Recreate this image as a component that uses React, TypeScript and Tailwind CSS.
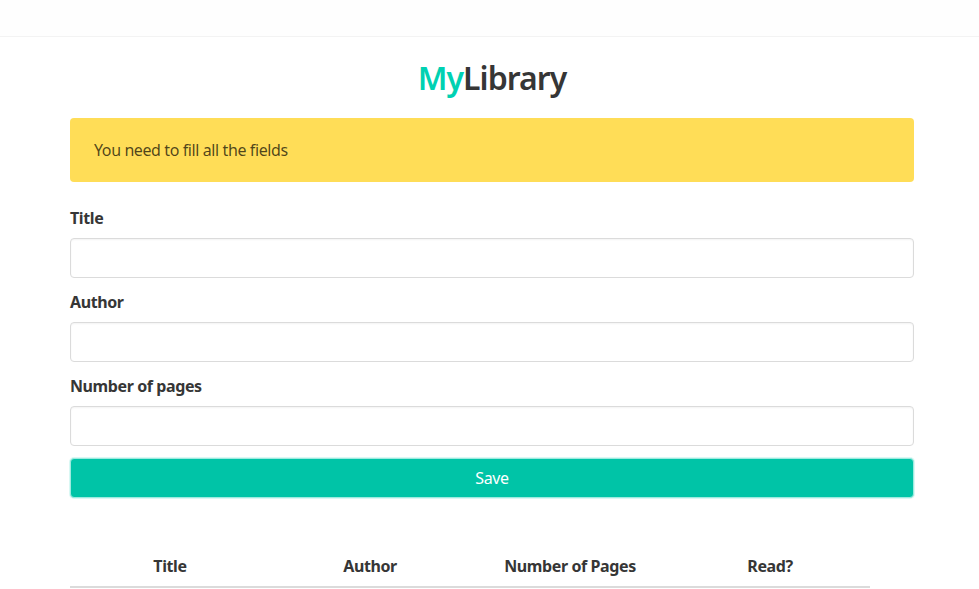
const fields = ["Title", "Author", "Number of pages"];
const columns = ["Title", "Author", "Number of Pages", "Read?"];

const App = () => {
  return (
    <div className="min-h-[589px] bg-white text-[#4a4a4a] tracking-[-0.025em] font-['Noto_Sans','Open_Sans',sans-serif]">
      {/* Navbar */}
      <nav className="h-[37px] bg-[#fefefe] border-b border-[#f3f3f3]" />

      <div className="w-[844px] ml-[70px] pt-[23px]">
        <h1 className="text-center text-[32px] leading-[36px] font-semibold tracking-[-0.03em] mb-[22px]">
          <span className="text-[#00d1b2]">My</span>
          <span className="text-[#363636]">Library</span>
        </h1>

        <div className="rounded bg-[#ffdd57] text-[rgba(0,0,0,0.7)] text-base leading-6 pl-6 pr-10 py-5 mb-6">
          You need to fill all the fields
        </div>

        <form className="flex flex-col">
          {fields.map((f) => (
            <div key={f} className="mb-3">
              <label className="block text-[#363636] font-bold text-base leading-6 mb-2">{f}</label>
              <input
                type="text"
                className="block w-full h-10 rounded border border-[#dbdbdb] bg-white px-3 outline-none shadow-[inset_0_1px_2px_rgba(10,10,10,0.05)]"
              />
            </div>
          ))}
          <button
            type="button"
            className="w-full h-10 rounded bg-[#00c4a7] text-white text-base border border-[#9eeadf] shadow-[0_0_0_1px_rgba(0,209,178,0.15)]"
          >
            Save
          </button>
        </form>

        <table className="mt-12 w-[800px] table-fixed">
          <thead>
            <tr>
              {columns.map((c) => (
                <th
                  key={c}
                  className="w-[200px] text-center text-[#363636] font-bold text-base leading-6 py-2 px-3 border-b-2 border-[#dbdbdb]"
                >
                  {c}
                </th>
              ))}
            </tr>
          </thead>
        </table>
      </div>
    </div>
  );
};

export default App;
